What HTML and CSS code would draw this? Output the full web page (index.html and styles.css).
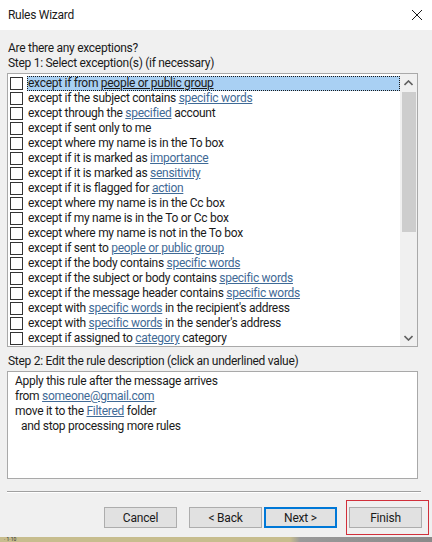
FILE: index.html
```html
<!DOCTYPE html>
<html lang="en">
<head>
    <meta charset="UTF-8">
    <title>Rules Wizard</title>

    <link rel="stylesheet" href="styles.css">
</head>
<body>

    <header class="titlebar">
        <span class="title">Rules Wizard</span>
        <svg class="close" width="12" height="12" viewBox="0 0 12 12">
            <path d="M1 1 L11 11 M11 1 L1 11" stroke="#1a1a1a" stroke-width="1" fill="none"/>
        </svg>
    </header>

    <main class="dialog">
        <p class="label first">Are there any exceptions?</p>
        <p class="label">Step 1: Select exception(s) (if necessary)</p>

        <div class="listbox">
            <ul class="items">
                <li class="item selected"><span class="check"></span><span class="text">except if from <u class="plain">people or public group</u></span></li>
                <li class="item"><span class="check"></span><span class="text">except if the subject contains <a href="#">specific words</a></span></li>
                <li class="item"><span class="check"></span><span class="text">except through the <a href="#">specified</a> account</span></li>
                <li class="item"><span class="check"></span><span class="text">except if sent only to me</span></li>
                <li class="item"><span class="check"></span><span class="text">except where my name is in the To box</span></li>
                <li class="item"><span class="check"></span><span class="text">except if it is marked as <a href="#">importance</a></span></li>
                <li class="item"><span class="check"></span><span class="text">except if it is marked as <a href="#">sensitivity</a></span></li>
                <li class="item"><span class="check"></span><span class="text">except if it is flagged for <a href="#">action</a></span></li>
                <li class="item"><span class="check"></span><span class="text">except where my name is in the Cc box</span></li>
                <li class="item"><span class="check"></span><span class="text">except if my name is in the To or Cc box</span></li>
                <li class="item"><span class="check"></span><span class="text">except where my name is not in the To box</span></li>
                <li class="item"><span class="check"></span><span class="text">except if sent to <a href="#">people or public group</a></span></li>
                <li class="item"><span class="check"></span><span class="text">except if the body contains <a href="#">specific words</a></span></li>
                <li class="item"><span class="check"></span><span class="text">except if the subject or body contains <a href="#">specific words</a></span></li>
                <li class="item"><span class="check"></span><span class="text">except if the message header contains <a href="#">specific words</a></span></li>
                <li class="item"><span class="check"></span><span class="text">except with <a href="#">specific words</a> in the recipient's address</span></li>
                <li class="item"><span class="check"></span><span class="text">except with <a href="#">specific words</a> in the sender's address</span></li>
                <li class="item"><span class="check"></span><span class="text">except if assigned to <a href="#">category</a> category</span></li>
            </ul>
            <div class="scrollbar">
                <div class="arrow">
                    <svg width="9" height="6" viewBox="0 0 9 6"><path d="M0.5 5 L4.5 1 L8.5 5" stroke="#606060" stroke-width="1.6" fill="none"/></svg>
                </div>
                <div class="track">
                    <div class="thumb"></div>
                </div>
                <div class="arrow">
                    <svg width="9" height="6" viewBox="0 0 9 6"><path d="M0.5 1 L4.5 5 L8.5 1" stroke="#606060" stroke-width="1.6" fill="none"/></svg>
                </div>
            </div>
        </div>

        <p class="label step2">Step 2: Edit the rule description (click an underlined value)</p>

        <div class="description">
            <p>Apply this rule after the message arrives</p>
            <p>from <a href="#">someone@gmail.com</a></p>
            <p>move it to the <a href="#">Filtered</a> folder</p>
            <p class="indent">and stop processing more rules</p>
        </div>

        <hr class="separator">

        <div class="buttons">
            <button class="btn">Cancel</button>
            <button class="btn back">&lt; Back</button>
            <button class="btn default">Next &gt;</button>
            <div class="marked">
                <button class="btn">Finish</button>
            </div>
        </div>
    </main>

    <footer class="taskstrip">
        <span>· 1·10</span>
    </footer>

</body>
</html>
```

FILE: styles.css
```css
body {
    margin: 0;
    padding: 0;
    width: 432px;
    height: 542px;
    overflow: hidden;
    background: #f0f0f0;
    font-family: Roboto, sans-serif;
    font-size: 12px;
    letter-spacing: -0.28px;
    color: #1a1a1a;
    display: flex;
    flex-direction: column;
}

p {
    margin: 0;
}

a {
    color: #3f6a96;
    text-decoration: underline;
}

.titlebar {
    height: 30px;
    flex: none;
    background: #fff;
    display: flex;
    align-items: center;
    justify-content: space-between;
    padding: 0 9px 0 8px;
}

.title {
    font-size: 12px;
}

.dialog {
    flex: 1;
    padding: 11px 14px 0 7px;
    display: flex;
    flex-direction: column;
}

.label {
    line-height: 15px;
    padding-left: 1px;
}

/* list of exceptions with its scrollbar */
.listbox {
    margin-top: 2px;
    height: 272px;
    border: 1px solid #a9a9a9;
    background: #fff;
    display: flex;
    overflow: hidden;
}

.items {
    list-style: none;
    margin: 0;
    padding: 2px 0 0 2px;
    flex: 1;
    overflow: hidden;
}

.item {
    height: 15px;
    display: flex;
    align-items: center;
    white-space: nowrap;
}

.check {
    width: 11px;
    height: 11px;
    border: 1px solid #333;
    background: #fff;
    flex: none;
    margin-right: 4px;
}

.text {
    height: 15px;
    line-height: 15px;
    padding-left: 1px;
    flex: 1;
}

.selected .text {
    background: #a9d0f3;
    outline: 1px dotted #1a1a1a;
    outline-offset: -1px;
}

u.plain {
    text-decoration: underline;
}

.scrollbar {
    width: 17px;
    flex: none;
    background: #f0f0f0;
    display: flex;
    flex-direction: column;
}

.arrow {
    height: 17px;
    display: flex;
    align-items: center;
    justify-content: center;
    flex: none;
}

.track {
    flex: 1;
    padding: 1px 1px 0 2px;
}

.thumb {
    height: 140px;
    background: #cdcdcd;
}

.step2 {
    margin-top: 7px;
}

.description {
    margin-top: 2px;
    height: 101px;
    border: 1px solid #a9a9a9;
    background: #fff;
    padding: 2px 7px 3px;
    line-height: 15px;
}

.indent {
    padding-left: 6px;
}

.separator {
    margin: 12px -3px 0 0;
    border: 0;
    border-top: 1px solid #a0a0a0;
    border-bottom: 1px solid #fff;
}

.buttons {
    display: flex;
    align-items: center;
    justify-content: flex-end;
    margin-top: 7px;
    margin-right: -11px;
}

.btn {
    width: 73px;
    height: 21px;
    margin: 0;
    padding: 0;
    font-family: Roboto, sans-serif;
    font-size: 12px;
    letter-spacing: -0.2px;
    color: #1a1a1a;
    background: #e1e1e1;
    border: 1px solid #adadad;
    margin-left: 12px;
}

.back {
    margin-left: 12px;
}

.default {
    margin-left: 2px;
    border: 2px solid #0078d7;
}

.marked {
    margin-left: 9px;
    height: 33px;
    padding: 0 6px 0 2px;
    border: 1px solid #d1303b;
    display: flex;
    align-items: center;
}

.marked .btn {
    margin-left: 0;
}

.taskstrip {
    height: 5px;
    flex: none;
    background: linear-gradient(to right, #c7bd8e 0, #c7bd8e 290px, #9a9a9a 300px, #8a8a8a 100%);
    font-size: 5px;
    line-height: 5px;
    letter-spacing: 0;
    overflow: hidden;
    padding-left: 4px;
    color: #333;
}
```
